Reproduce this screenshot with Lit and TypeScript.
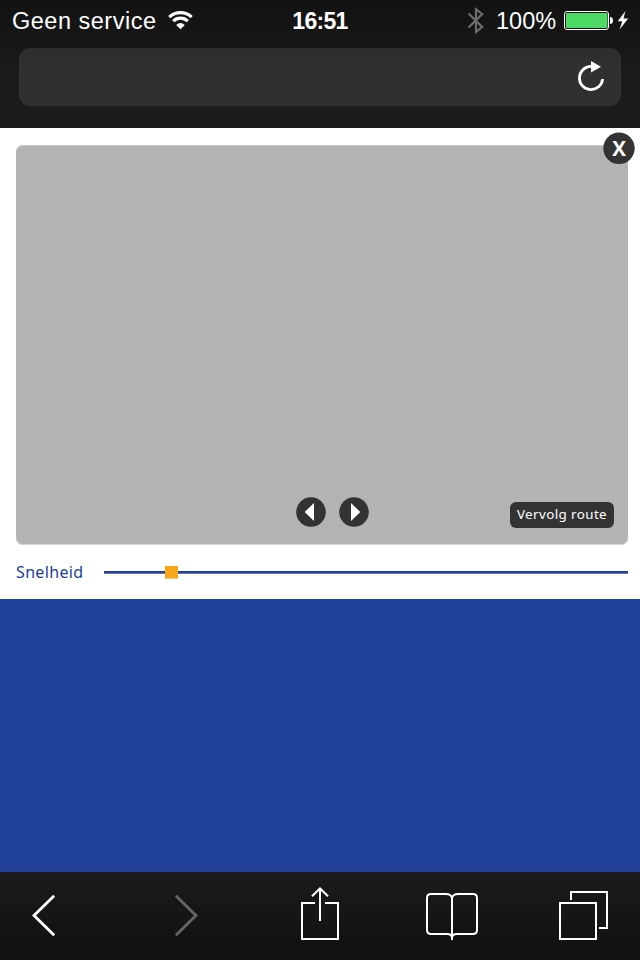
import { LitElement, html, css } from "lit";
import { customElement, property } from "lit/decorators.js";

@customElement("status-bar")
class StatusBar extends LitElement {
  static styles = css`
    :host {
      display: grid;
      grid-template-columns: 280px 80px 1fr;
      height: 41px;
      color: #fff;
      font: 24px/42px "Liberation Sans", Arial, sans-serif;
      white-space: nowrap;
    }
    .left, .right { display: flex; }
    .left { padding-left: 12px; }
    .carrier { width: 154px; font-size: 23.5px; letter-spacing: 0.5px; }
    .time { text-align: center; font-weight: 700; font-size: 23px; line-height: 43px; letter-spacing: -0.7px; }
    .right { padding-left: 104px; }
    .percent { width: 68px; padding-left: 6px; font-size: 23.5px; line-height: 43px; letter-spacing: 0; }
    svg { display: block; flex: none; }
  `;
  render() {
    return html`
      <div class="left">
        <span class="carrier">Geen service</span>
        <svg width="30" height="41" viewBox="166 0 30 41" fill="none" stroke="#fff" stroke-width="3.2">
          <path d="M169.3 17.2A16.2 16.2 0 0 1 191.7 17.2" />
          <path d="M173.2 21.2A10.4 10.4 0 0 1 187.8 21.2" />
          <path d="M180.5 29.2L176.2 24.9Q180.5 21 184.8 24.9Z" fill="#fff" stroke="none" />
        </svg>
      </div>
      <div class="time">16:51</div>
      <div class="right">
        <svg width="26" height="41" viewBox="464 0 26 41" fill="none" stroke="#6c6c6c" stroke-width="2.2">
          <path d="M468.5 13.5L482.2 27L476 32V9.2L482.2 14L468.5 27.5" />
        </svg>
        <span class="percent">100%</span>
        <svg width="70" height="41" viewBox="564 0 70 41">
          <rect x="564.5" y="11.5" width="44" height="18" rx="2.5" fill="#111" stroke="#fff" />
          <rect x="566" y="13" width="41.5" height="15" rx="1" fill="#4cd964" />
          <path d="M610 17Q613 17.3 613 20.5T610 24Z" fill="#fff" />
          <path d="M625.4 11L617.8 21.2H622.2L619.6 29.5L628.2 18.6H623.5Z" fill="#fff" />
        </svg>
      </div>
    `;
  }
}

@customElement("address-bar")
class AddressBar extends LitElement {
  static styles = css`
    :host { display: block; padding: 7px 19px 22px; }
    .field {
      box-sizing: border-box;
      height: 58px;
      display: flex;
      justify-content: flex-end;
      padding-right: 13px;
      border-radius: 11px;
      background: linear-gradient(#2c2c2c, #303030 30%, #303030);
    }
    svg { display: block; }
  `;
  render() {
    return html`
      <div class="field">
        <svg width="34" height="58" viewBox="574 48 34 58">
          <path d="M591 66.4A11.6 11.6 0 1 0 602.6 79" fill="none" stroke="#fff" stroke-width="2.8" />
          <path d="M591 61L601 66.8L591 72.6Z" fill="#fff" />
        </svg>
      </div>
    `;
  }
}

@customElement("route-player")
class RoutePlayer extends LitElement {
  @property({ type: Number }) speed = 0.129;
  static styles = css`
    :host {
      display: block;
      box-sizing: border-box;
      height: 471px;
      padding: 17px 12px 0 16px;
      background: #fff;
      font-family: "Noto Sans", "Open Sans", sans-serif;
    }
    .stage {
      position: relative;
      box-sizing: border-box;
      height: 400px;
      border-radius: 7px;
      background: #b3b3b3;
      box-shadow: inset 0 1px #cacaca, inset 0 -1px #d6d6d6;
      display: grid;
      grid-template-columns: 280px 1fr auto;
      align-items: end;
      padding: 0 14px 17px 0;
    }
    .close {
      position: absolute;
      top: -13px;
      right: -7px;
    }
    .steps { grid-column: 2; display: flex; gap: 13px; padding-bottom: 1px; }
    svg { display: block; }
    .continue {
      width: 104px;
      height: 26px;
      border-radius: 6px;
      background: #333;
      color: #fff;
      font-size: 13.4px;
      line-height: 24.5px;
      letter-spacing: 0.4px;
      text-align: center;
      white-space: nowrap;
    }
    .speed { display: flex; align-items: center; height: 54px; }
    .label { width: 88px; color: #21409a; font-size: 16px; line-height: 53px; letter-spacing: 0.35px; }
    .track {
      position: relative;
      flex: 1;
      height: 3px;
      margin-top: 1px;
      background: linear-gradient(#21409a 66.6%, #6479b8 66.6%);
    }
    .thumb {
      position: absolute;
      top: -5px;
      width: 13px;
      height: 13px;
      margin-left: -6.5px;
      background: linear-gradient(#faa61a 92.3%, #fcc467 92.3%);
    }
    text { font: 700 20.5px "Open Sans", "Noto Sans", sans-serif; fill: #fff; }
  `;
  render() {
    return html`
      <div class="stage">
        <svg class="close" width="32" height="32" viewBox="0 0 32 32">
          <circle cx="16" cy="16.3" r="15.7" fill="#333" />
          <text x="16" y="23.7" text-anchor="middle">X</text>
        </svg>
        <div class="steps">
          <svg width="30" height="30" viewBox="0 0 30 30">
            <circle cx="15" cy="15" r="14.8" fill="#333" />
            <path d="M8.7 15L18 6V24Z" fill="#fff" />
          </svg>
          <svg width="30" height="30" viewBox="0 0 30 30">
            <circle cx="15" cy="15" r="14.8" fill="#333" />
            <path d="M21.3 15L12 6V24Z" fill="#fff" />
          </svg>
        </div>
        <div class="continue">Vervolg route</div>
      </div>
      <div class="speed">
        <span class="label">Snelheid</span>
        <div class="track"><div class="thumb" style="left:${this.speed * 100}%"></div></div>
      </div>
    `;
  }
}

@customElement("tool-bar")
class ToolBar extends LitElement {
  static styles = css`
    :host {
      display: grid;
      grid-template-columns: 88px 196px 72px 192px 72px;
      justify-content: start;
      height: 88px;
      background: linear-gradient(#1b1b1b, #101010);
    }
    svg { display: block; justify-self: center; }
  `;
  render() {
    return html`
      <svg width="88" height="88" viewBox="0 872 88 88" fill="none" stroke="#fff" stroke-width="2.8">
        <path d="M54.2 895.8L34 915.5L54.2 935.2" />
      </svg>
      <svg width="196" height="88" viewBox="88 872 196 88" fill="none" stroke="#666" stroke-width="2.8">
        <path d="M175.8 895.8L196 915.5L175.8 935.2" />
      </svg>
      <svg width="72" height="88" viewBox="284 872 72 88" fill="none" stroke="#fff" stroke-width="2">
        <path d="M315 903H302V939H338V903H325M320 921V888.5M312 896.3L320 888.5L328 896.3" />
      </svg>
      <svg width="192" height="88" viewBox="356 872 192 88" fill="none" stroke="#fff" stroke-width="2">
        <path d="M452 940V898Q451 894 446 894H431Q427 894 427 898V930Q427 934 431 934H447Q452 934 452 938Q452 934 457 934H473Q477 934 477 930V898Q477 894 473 894H458Q453 894 452 898" />
      </svg>
      <svg width="72" height="88" viewBox="548 872 72 88" fill="none" stroke="#fff" stroke-width="2">
        <path d="M560 903H596V939H560ZM571 900V892H607V928H599" />
      </svg>
    `;
  }
}

@customElement("app-root")
class AppRoot extends LitElement {
  static styles = css`
    :host {
      display: flex;
      flex-direction: column;
      width: 640px;
      height: 960px;
      overflow: hidden;
      background: #21409a;
    }
    .chrome { height: 128px; background: linear-gradient(#121212, #1b1b1b 60%, #1b1b1b); }
    .page { flex: 1; }
  `;
  render() {
    return html`
      <div class="chrome">
        <status-bar></status-bar>
        <address-bar></address-bar>
      </div>
      <div class="page"><route-player></route-player></div>
      <tool-bar></tool-bar>
    `;
  }
}
